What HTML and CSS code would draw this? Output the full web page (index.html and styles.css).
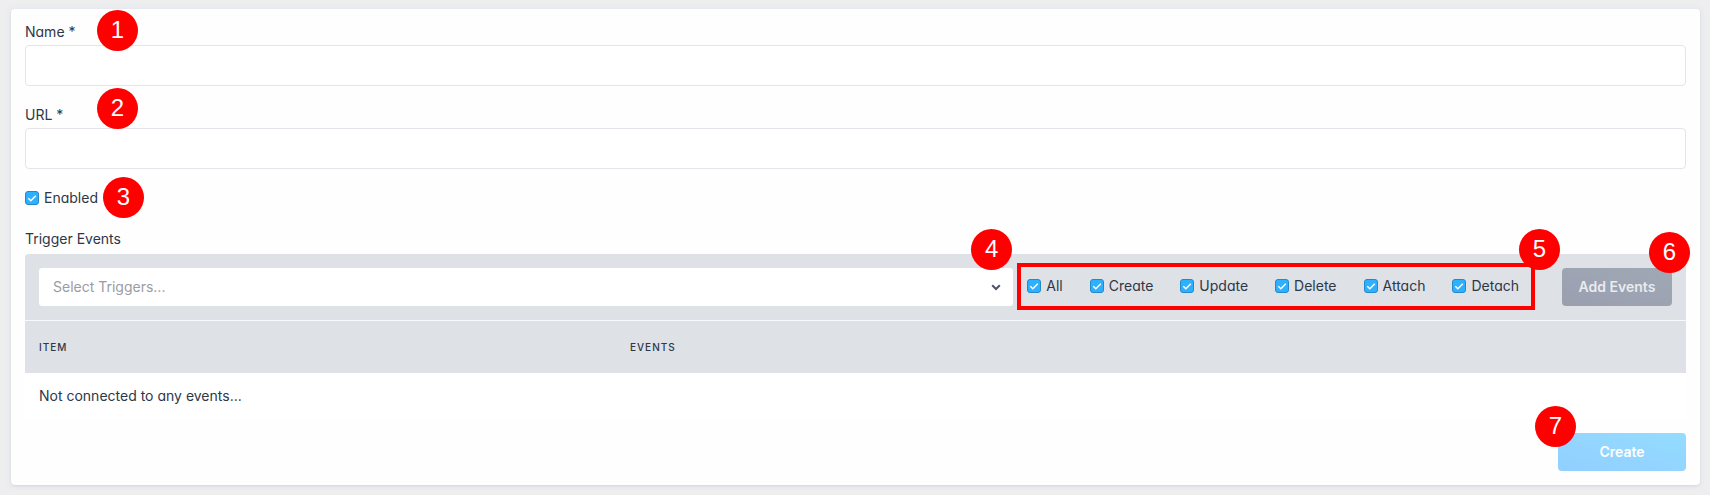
FILE: index.html
```html
<!DOCTYPE html>
<html lang="en">
<head>
<meta charset="utf-8">
<title>Webhook</title>
<link rel="stylesheet" href="styles.css">
</head>
<body>
<main class="page">
  <form class="card">
    <div class="field">
      <label class="label" for="name">Name *</label>
      <input class="text-input" id="name" type="text">
      <span class="badge badge-name">1</span>
    </div>
    <div class="field">
      <label class="label" for="url">URL *</label>
      <input class="text-input" id="url" type="text">
      <span class="badge badge-url">2</span>
    </div>
    <div class="enabled">
      <label class="check"><input type="checkbox" checked>Enabled</label>
      <span class="badge badge-enabled">3</span>
    </div>
    <section class="triggers">
      <label class="label" for="trigger">Trigger Events</label>
      <div class="toolbar">
        <div class="select-wrap">
          <select class="select" id="trigger"><option>Select Triggers...</option></select>
          <svg class="chevron" viewBox="0 0 10 7" aria-hidden="true"><path d="M1.2 1.2 5 5l3.8-3.8"/></svg>
          <span class="badge badge-select">4</span>
        </div>
        <div class="checks">
          <label class="check"><input type="checkbox" checked>All</label>
          <label class="check"><input type="checkbox" checked>Create</label>
          <label class="check"><input type="checkbox" checked>Update</label>
          <label class="check"><input type="checkbox" checked>Delete</label>
          <label class="check"><input type="checkbox" checked>Attach</label>
          <label class="check"><input type="checkbox" checked>Detach</label>
          <span class="frame"></span>
          <span class="badge badge-checks">5</span>
        </div>
        <div class="action">
          <button class="button button-add" type="button">Add Events</button>
          <span class="badge badge-add">6</span>
        </div>
      </div>
      <table class="events">
        <thead><tr><th class="item-col">Item</th><th>Events</th></tr></thead>
        <tbody><tr><td colspan="2">Not connected to any events...</td></tr></tbody>
      </table>
    </section>
    <div class="footer">
      <div class="action">
        <button class="button button-create" type="submit">Create</button>
        <span class="badge badge-create">7</span>
      </div>
    </div>
  </form>
</main>
</body>
</html>
```
FILE: styles.css
```css
* {
  box-sizing: border-box;
}

body {
  margin: 0;
  background: #eeeeee;
  color: #2d3748;
  font: 14px/18px Inter, "Liberation Sans", sans-serif;
  font-feature-settings: "cv11";
}

.page {
  padding: 9px 10px 10px 11px;
}

.card {
  padding: 14px;
  border-radius: 4px;
  background: #fefefe;
  box-shadow: 0 1px 3px rgba(0, 0, 0, 0.1), 0 0 0 5px #ebecf0;
}

.field {
  position: relative;
  display: flex;
  flex-direction: column;
  gap: 4px;
  margin-bottom: 20px;
}

.label {
  display: block;
}

.text-input {
  width: 100%;
  height: 41px;
  padding: 0 12px;
  border: 1px solid #e2e5ea;
  border-radius: 4px;
  background: #ffffff;
  color: inherit;
  font: inherit;
}

.enabled {
  position: relative;
  display: flex;
  margin-bottom: 23px;
}

.check {
  display: flex;
  align-items: center;
  gap: 5px;
}

.check input {
  appearance: none;
  flex: none;
  width: 14px;
  height: 14px;
  margin: 0;
  border: 1px solid #2589c4;
  border-radius: 3px;
  background: #2db0ff url("data:image/svg+xml,%3Csvg xmlns='http://www.w3.org/2000/svg' viewBox='0 0 12 12'%3E%3Cpath d='M2.3 6.3 4.8 8.7 9.8 3.7' fill='none' stroke='white' stroke-width='1.5'/%3E%3C/svg%3E") center / 12px 12px no-repeat;
}

.triggers .label {
  margin-bottom: 6px;
}

.toolbar {
  display: flex;
  align-items: center;
  padding: 14px;
  border-bottom: 1px solid #f8f9fa;
  border-radius: 4px 4px 0 0;
  background: #dee1e6;
}

.select-wrap {
  position: relative;
  flex: 1;
}

.select {
  appearance: none;
  display: block;
  width: 100%;
  height: 38px;
  padding: 0 14px;
  border: 0;
  border-radius: 3px;
  background: #ffffff;
  color: #9a9ca5;
  font: inherit;
  font-feature-settings: normal;
}

.chevron {
  position: absolute;
  top: 16px;
  right: 12px;
  width: 10px;
  height: 7px;
  fill: none;
  stroke: #4a5568;
  stroke-width: 2;
}

.checks {
  position: relative;
  display: flex;
  gap: 27px;
  margin: 0 43px 2px 14px;
}

.frame {
  position: absolute;
  inset: -14px -16px -15px -10px;
  border: 4px solid #ff0000;
  pointer-events: none;
}

.action {
  position: relative;
}

.button {
  display: block;
  height: 38px;
  border: 0;
  border-radius: 4px;
  font: 600 14px/18px Inter, "Liberation Sans", sans-serif;
}

.button-add {
  width: 110px;
  background: linear-gradient(15deg, #9a9fb0, #a0a8b4);
  color: #e9ebef;
}

.events {
  width: 100%;
  border-collapse: collapse;
}

.events th {
  height: 52px;
  padding: 0 14px;
  background: #dee1e6;
  font-size: 10px;
  font-weight: 500;
  letter-spacing: 1px;
  text-align: left;
  text-transform: uppercase;
}

.events .item-col {
  width: 591px;
}

.events td {
  height: 46px;
  padding: 0 14px;
  background: #ffffff;
}

.footer {
  display: flex;
  justify-content: flex-end;
  margin-top: 14px;
}

.button-create {
  width: 128px;
  background: linear-gradient(15deg, #92cfff, #94dcff);
  color: #ffffff;
}

.badge {
  position: absolute;
  width: 41px;
  height: 41px;
  border-radius: 50%;
  background: #ff0000;
  color: #ffffff;
  font: 24px/39px "Liberation Sans", Arial, sans-serif;
  text-align: center;
}

.badge-name {
  top: -13px;
  left: 72px;
}

.badge-url {
  top: -18px;
  left: 72px;
}

.badge-enabled {
  top: -12px;
  left: 78px;
}

.badge-select {
  top: -39px;
  right: 1px;
}

.badge-checks {
  top: -48px;
  right: -41px;
}

.badge-add {
  top: -36px;
  right: -18px;
}

.badge-create {
  top: -27px;
  left: -23px;
}
```
